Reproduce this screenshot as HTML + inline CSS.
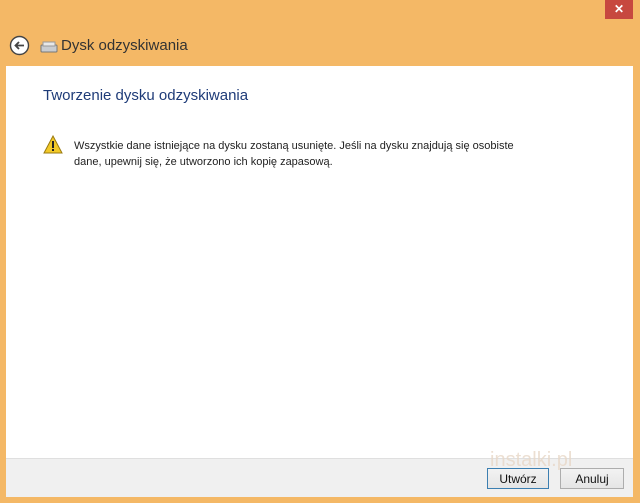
<!DOCTYPE html>
<html><head><meta charset="utf-8"><style>
body{margin:0;width:640px;height:503px;background:#f4b866;position:relative;overflow:hidden;font-family:"Liberation Sans",sans-serif}
.abs{position:absolute}
</style></head><body>
<div class="abs" style="left:605px;top:0;width:28px;height:19px;background:#c7483f;color:#fff;font-size:12px;text-align:center;line-height:18px;font-weight:bold">✕</div>
<svg class="abs" style="left:9px;top:35px" width="21" height="21"><circle cx="10.5" cy="10.5" r="9" fill="#fff" stroke="#444" stroke-width="1.4"/><path d="M15 10.5H6.5M10 7L6.5 10.5L10 14" stroke="#444" stroke-width="1.8" fill="none"/></svg>
<svg class="abs" style="left:40px;top:41px" width="18" height="12"><rect x="1" y="4" width="16" height="7" rx="1" fill="#c9ccd0" stroke="#777"/><rect x="3" y="1" width="12" height="4" fill="#e8e8e8" stroke="#999"/></svg>
<div class="abs" style="left:61px;top:37px;font-size:15px;color:#333">Dysk odzyskiwania</div>
<div class="abs" style="left:6px;top:66px;width:627px;height:392px;background:#fff"></div>
<div class="abs" style="left:6px;top:458px;width:627px;height:38px;background:#f0f0f0;border-top:1px solid #dfdfdf"></div>
<div class="abs" style="left:43px;top:87px;font-size:15px;color:#1e3b78">Tworzenie dysku odzyskiwania</div>
<svg class="abs" style="left:43px;top:135px" width="20" height="19"><path d="M10 1L19 18H1Z" fill="#f2c928" stroke="#9a7a10"/><rect x="9" y="6" width="2" height="7" fill="#222"/><rect x="9" y="14" width="2" height="2" fill="#222"/></svg>
<div class="abs" style="left:74px;top:138px;font-size:11px;color:#222;line-height:16px">Wszystkie dane istniejące na dysku zostaną usunięte. Jeśli na dysku znajdują się osobiste<br>dane, upewnij się, że utworzono ich kopię zapasową.</div>
<div class="abs" style="left:490px;top:449px;font-size:20px;color:#e8d8c8;opacity:.8">instalki.pl</div>
<div class="abs" style="left:487px;top:468px;width:62px;height:21px;border:1px solid #3c7fb1;background:linear-gradient(#f2f2f2,#e5e5e5);font-size:12px;text-align:center;line-height:21px;color:#111;box-sizing:border-box">Utwórz</div>
<div class="abs" style="left:560px;top:468px;width:64px;height:21px;border:1px solid #adadad;background:linear-gradient(#f2f2f2,#e5e5e5);font-size:12px;text-align:center;line-height:21px;color:#111;box-sizing:border-box">Anuluj</div>
</body></html>
